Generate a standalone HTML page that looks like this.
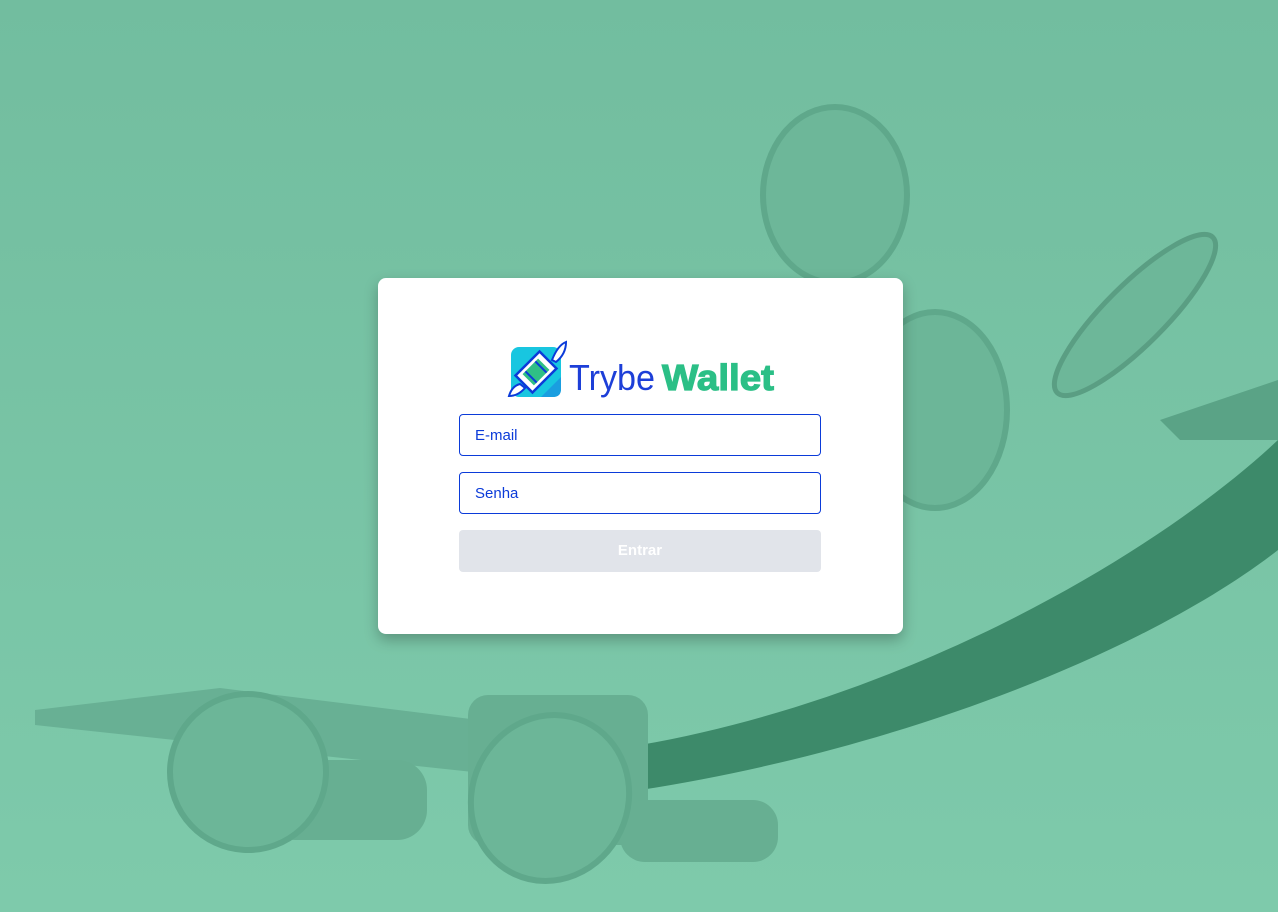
<!DOCTYPE html>
<html><head><meta charset="utf-8"><style>
*{box-sizing:border-box;margin:0;padding:0}
body{width:1278px;height:912px;overflow:hidden;background:#76c1a3;font-family:"Liberation Sans",sans-serif;position:relative}
svg.bg{position:absolute;left:0;top:0}
.card{position:absolute;left:378px;top:278px;width:525px;height:356px;background:#fff;border-radius:8px;box-shadow:0 6px 14px rgba(0,0,0,.25)}
.logo{position:absolute;left:128px;top:62px;width:270px;height:58px}
.in{position:absolute;left:81px;width:362px;height:42px;border:1px solid #0b3bd9;border-radius:4px;color:#0b3bd9;font-size:15px;padding:13px 15px;line-height:15px}
.btn{position:absolute;left:81px;top:252px;width:362px;height:42px;background:#e1e4ea;border-radius:4px;color:#fff;font-weight:bold;font-size:15px;text-align:center;line-height:42px}
</style></head><body>
<svg class="bg" width="1278" height="912" viewBox="0 0 1278 912">
<defs><linearGradient id="g" x1="0" y1="0" x2="0" y2="1"><stop offset="0" stop-color="#72bd9f"/><stop offset="1" stop-color="#7ecaab"/></linearGradient></defs>
<rect width="1278" height="912" fill="url(#g)"/>
<path d="M640 745 C900 700 1150 560 1278 440 L1278 550 C1150 650 900 750 640 790 Z" fill="#3d8a6a"/>
<path d="M1160 420 L1278 380 L1278 440 L1180 440 Z" fill="#5aa386"/>
<path d="M35 710 L220 688 L640 740 L640 790 L35 725 Z" fill="#68b094"/>
<ellipse cx="835" cy="195" rx="72" ry="88" fill="#6db799" stroke="#5fa88b" stroke-width="6"/>
<ellipse cx="935" cy="410" rx="72" ry="98" fill="#6cb698" stroke="#5fa88b" stroke-width="6"/>
<ellipse cx="1135" cy="315" rx="30" ry="110" transform="rotate(45 1135 315)" fill="#6db799" stroke="#5a9e83" stroke-width="5"/>
<rect x="265" y="760" width="162" height="80" rx="30" fill="#67af92"/>
<rect x="468" y="695" width="180" height="150" rx="20" fill="#67af92"/>
<rect x="620" y="800" width="158" height="62" rx="25" fill="#67af92"/>
<ellipse cx="248" cy="772" rx="78" ry="78" transform="rotate(25 248 772)" fill="#6cb698" stroke="#5fa88b" stroke-width="6"/>
<ellipse cx="550" cy="798" rx="78" ry="84" transform="rotate(25 550 798)" fill="#6cb698" stroke="#5fa88b" stroke-width="6"/>
</svg>
<div class="card">
<svg class="logo" viewBox="0 0 270 58">
<rect x="5" y="7" width="50" height="50" rx="8" fill="#18c6e0"/>
<path d="M35 57 L55 37 L55 49 Q55 57 47 57 Z" fill="#1a9ee0"/>
<g transform="rotate(-45 30 32)">
<rect x="13" y="20" width="34" height="24" fill="#fff" stroke="#0b3bd9" stroke-width="2.5"/>
<rect x="19" y="24" width="22" height="16" fill="#2fbf86"/>
<line x1="23" y1="24" x2="23" y2="40" stroke="#0b3bd9" stroke-width="2"/>
<line x1="37" y1="24" x2="37" y2="40" stroke="#0b3bd9" stroke-width="2"/>
</g>
<path d="M46 20 Q52 5 60 2 Q60 14 50 22 Z" fill="#fff" stroke="#0b3bd9" stroke-width="2"/>
<path d="M14 44 Q6 46 3 56 Q12 56 19 48 Z" fill="#fff" stroke="#0b3bd9" stroke-width="2"/>
<text x="63" y="50" font-family="Liberation Sans,sans-serif" font-size="36" fill="#1d3fd8" textLength="86" lengthAdjust="spacingAndGlyphs">Trybe</text>
<text x="156" y="50" font-family="Liberation Sans,sans-serif" font-size="36" font-weight="bold" fill="#2bbf86" textLength="112" lengthAdjust="spacingAndGlyphs" stroke="#2bbf86" stroke-width="1.2">Wallet</text>
</svg>
<div class="in" style="top:136px">E-mail</div>
<div class="in" style="top:194px">Senha</div>
<div class="btn">Entrar</div>
</div>
</body></html>
